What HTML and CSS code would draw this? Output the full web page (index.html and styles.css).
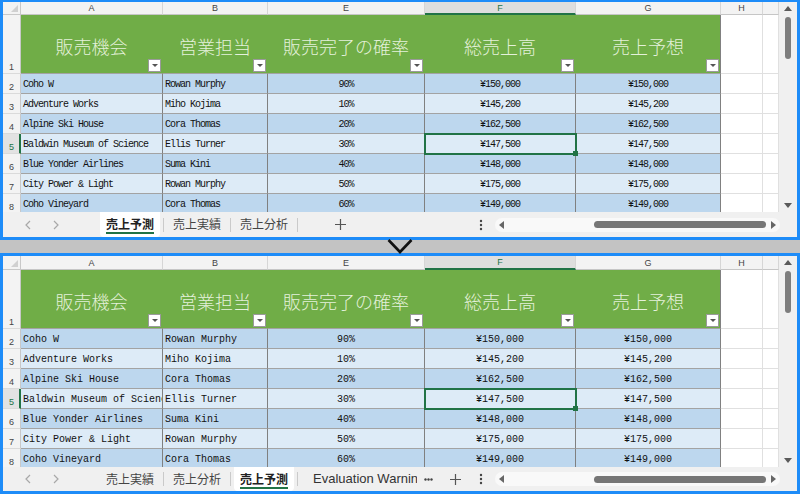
FILE: index.html
```html
<!DOCTYPE html>
<html lang="ja">
<head>
<meta charset="utf-8">
<title>売上予測</title>
<link rel="stylesheet" href="styles.css">
</head>
<body>
<div class="app">
  <section class="panel panel-top">
    <div class="sheet">
      <div class="grid">
        <div class="cell corner"></div>
        <div class="cell ch">A</div>
        <div class="cell ch">B</div>
        <div class="cell ch">E</div>
        <div class="cell ch active">F</div>
        <div class="cell ch">G</div>
        <div class="cell ch">H</div>
        <div class="cell ch"></div>

        <div class="cell rh">1</div>
        <div class="cell hd">販売機会<span class="filter"></span></div>
        <div class="cell hd">営業担当<span class="filter"></span></div>
        <div class="cell hd">販売完了の確率<span class="filter"></span></div>
        <div class="cell hd">総売上高<span class="filter"></span></div>
        <div class="cell hd hd-last">売上予想<span class="filter"></span></div>
        <div class="cell e"></div><div class="cell e"></div>

        <div class="cell rh">2</div>
        <div class="cell d dl ra">Coho W</div>
        <div class="cell d dl ra">Rowan Murphy</div>
        <div class="cell d dc ra">90%</div>
        <div class="cell d dc ra">¥150,000</div>
        <div class="cell d dc ra">¥150,000</div>
        <div class="cell e"></div><div class="cell e"></div>

        <div class="cell rh">3</div>
        <div class="cell d dl rb">Adventure Works</div>
        <div class="cell d dl rb">Miho Kojima</div>
        <div class="cell d dc rb">10%</div>
        <div class="cell d dc rb">¥145,200</div>
        <div class="cell d dc rb">¥145,200</div>
        <div class="cell e"></div><div class="cell e"></div>

        <div class="cell rh">4</div>
        <div class="cell d dl ra">Alpine Ski House</div>
        <div class="cell d dl ra">Cora Thomas</div>
        <div class="cell d dc ra">20%</div>
        <div class="cell d dc ra">¥162,500</div>
        <div class="cell d dc ra">¥162,500</div>
        <div class="cell e"></div><div class="cell e"></div>

        <div class="cell rh active">5</div>
        <div class="cell d dl rb">Baldwin Museum of Science</div>
        <div class="cell d dl rb">Ellis Turner</div>
        <div class="cell d dc rb">30%</div>
        <div class="cell d dc rb sel">¥147,500</div>
        <div class="cell d dc rb">¥147,500</div>
        <div class="cell e"></div><div class="cell e"></div>

        <div class="cell rh">6</div>
        <div class="cell d dl ra">Blue Yonder Airlines</div>
        <div class="cell d dl ra">Suma Kini</div>
        <div class="cell d dc ra">40%</div>
        <div class="cell d dc ra">¥148,000</div>
        <div class="cell d dc ra">¥148,000</div>
        <div class="cell e"></div><div class="cell e"></div>

        <div class="cell rh">7</div>
        <div class="cell d dl rb">City Power &amp; Light</div>
        <div class="cell d dl rb">Rowan Murphy</div>
        <div class="cell d dc rb">50%</div>
        <div class="cell d dc rb">¥175,000</div>
        <div class="cell d dc rb">¥175,000</div>
        <div class="cell e"></div><div class="cell e"></div>

        <div class="cell rh">8</div>
        <div class="cell d dl ra">Coho Vineyard</div>
        <div class="cell d dl ra">Cora Thomas</div>
        <div class="cell d dc ra">60%</div>
        <div class="cell d dc ra">¥149,000</div>
        <div class="cell d dc ra">¥149,000</div>
        <div class="cell e"></div><div class="cell e"></div>
      </div>
      <div class="vscroll">
        <svg class="vs-up" width="8" height="5" viewBox="0 0 8 5"><polygon points="4,0 8,5 0,5" fill="#5a5a5a"/></svg>
        <div class="vs-thumb"></div>
        <svg class="vs-down" width="8" height="5" viewBox="0 0 8 5"><polygon points="0,0 8,0 4,5" fill="#5a5a5a"/></svg>
      </div>
    </div>
    <div class="tabbar">
      <div class="nav">
        <svg width="6" height="10" viewBox="0 0 6 10"><polyline points="5,1 1,5 5,9" fill="none" stroke="#a8a8a8" stroke-width="1.2"/></svg>
        <svg width="6" height="10" viewBox="0 0 6 10"><polyline points="1,1 5,5 1,9" fill="none" stroke="#a8a8a8" stroke-width="1.2"/></svg>
      </div>
      <div class="tab active"><span class="lbl">売上予測</span></div>
      <div class="sep"></div>
      <div class="tab"><span class="lbl">売上実績</span></div>
      <div class="sep"></div>
      <div class="tab"><span class="lbl">売上分析</span></div>
      <div class="sep"></div>
      <svg class="add add-top" width="11" height="11" viewBox="0 0 11 11"><path d="M5.5 0V11M0 5.5H11" stroke="#555" stroke-width="1.2"/></svg>
      <div class="right">
        <svg class="kebab" width="4" height="12" viewBox="0 0 4 12"><circle cx="2" cy="2" r="1.2" fill="#444"/><circle cx="2" cy="6" r="1.2" fill="#444"/><circle cx="2" cy="10" r="1.2" fill="#444"/></svg>
        <div class="track">
          <svg class="tr-l" width="5" height="8" viewBox="0 0 5 8"><polygon points="5,0 5,8 0,4" fill="#666"/></svg>
          <div class="tr-thumb"></div>
          <svg class="tr-r" width="5" height="8" viewBox="0 0 5 8"><polygon points="0,0 5,4 0,8" fill="#666"/></svg>
        </div>
      </div>
    </div>
  </section>

  <div class="splitter"></div>

  <section class="panel panel-bottom">
    <div class="sheet">
      <div class="grid">
        <div class="cell corner"></div>
        <div class="cell ch">A</div>
        <div class="cell ch">B</div>
        <div class="cell ch">E</div>
        <div class="cell ch active">F</div>
        <div class="cell ch">G</div>
        <div class="cell ch">H</div>
        <div class="cell ch"></div>

        <div class="cell rh">1</div>
        <div class="cell hd">販売機会<span class="filter"></span></div>
        <div class="cell hd">営業担当<span class="filter"></span></div>
        <div class="cell hd">販売完了の確率<span class="filter"></span></div>
        <div class="cell hd">総売上高<span class="filter"></span></div>
        <div class="cell hd hd-last">売上予想<span class="filter"></span></div>
        <div class="cell e"></div><div class="cell e"></div>

        <div class="cell rh">2</div>
        <div class="cell d dl ra">Coho W</div>
        <div class="cell d dl ra">Rowan Murphy</div>
        <div class="cell d dc ra">90%</div>
        <div class="cell d dc ra">¥150,000</div>
        <div class="cell d dc ra">¥150,000</div>
        <div class="cell e"></div><div class="cell e"></div>

        <div class="cell rh">3</div>
        <div class="cell d dl rb">Adventure Works</div>
        <div class="cell d dl rb">Miho Kojima</div>
        <div class="cell d dc rb">10%</div>
        <div class="cell d dc rb">¥145,200</div>
        <div class="cell d dc rb">¥145,200</div>
        <div class="cell e"></div><div class="cell e"></div>

        <div class="cell rh">4</div>
        <div class="cell d dl ra">Alpine Ski House</div>
        <div class="cell d dl ra">Cora Thomas</div>
        <div class="cell d dc ra">20%</div>
        <div class="cell d dc ra">¥162,500</div>
        <div class="cell d dc ra">¥162,500</div>
        <div class="cell e"></div><div class="cell e"></div>

        <div class="cell rh active">5</div>
        <div class="cell d dl rb">Baldwin Museum of Science</div>
        <div class="cell d dl rb">Ellis Turner</div>
        <div class="cell d dc rb">30%</div>
        <div class="cell d dc rb sel">¥147,500</div>
        <div class="cell d dc rb">¥147,500</div>
        <div class="cell e"></div><div class="cell e"></div>

        <div class="cell rh">6</div>
        <div class="cell d dl ra">Blue Yonder Airlines</div>
        <div class="cell d dl ra">Suma Kini</div>
        <div class="cell d dc ra">40%</div>
        <div class="cell d dc ra">¥148,000</div>
        <div class="cell d dc ra">¥148,000</div>
        <div class="cell e"></div><div class="cell e"></div>

        <div class="cell rh">7</div>
        <div class="cell d dl rb">City Power &amp; Light</div>
        <div class="cell d dl rb">Rowan Murphy</div>
        <div class="cell d dc rb">50%</div>
        <div class="cell d dc rb">¥175,000</div>
        <div class="cell d dc rb">¥175,000</div>
        <div class="cell e"></div><div class="cell e"></div>

        <div class="cell rh">8</div>
        <div class="cell d dl ra">Coho Vineyard</div>
        <div class="cell d dl ra">Cora Thomas</div>
        <div class="cell d dc ra">60%</div>
        <div class="cell d dc ra">¥149,000</div>
        <div class="cell d dc ra">¥149,000</div>
        <div class="cell e"></div><div class="cell e"></div>
      </div>
      <div class="vscroll">
        <svg class="vs-up" width="8" height="5" viewBox="0 0 8 5"><polygon points="4,0 8,5 0,5" fill="#5a5a5a"/></svg>
        <div class="vs-thumb"></div>
        <svg class="vs-down" width="8" height="5" viewBox="0 0 8 5"><polygon points="0,0 8,0 4,5" fill="#5a5a5a"/></svg>
      </div>
    </div>
    <div class="tabbar">
      <div class="nav">
        <svg width="6" height="10" viewBox="0 0 6 10"><polyline points="5,1 1,5 5,9" fill="none" stroke="#a8a8a8" stroke-width="1.2"/></svg>
        <svg width="6" height="10" viewBox="0 0 6 10"><polyline points="1,1 5,5 1,9" fill="none" stroke="#a8a8a8" stroke-width="1.2"/></svg>
      </div>
      <div class="tab"><span class="lbl">売上実績</span></div>
      <div class="sep"></div>
      <div class="tab"><span class="lbl">売上分析</span></div>
      <div class="sep"></div>
      <div class="tab active"><span class="lbl">売上予測</span></div>
      <div class="sep"></div>
      <div class="tab tab-eval"><span class="lbl">Evaluation Warning</span></div>
      <svg class="more" width="9" height="3" viewBox="0 0 9 3"><circle cx="1.5" cy="1.5" r="1.2" fill="#444"/><circle cx="4.5" cy="1.5" r="1.2" fill="#444"/><circle cx="7.5" cy="1.5" r="1.2" fill="#444"/></svg>
      <svg class="add add-bottom" width="11" height="11" viewBox="0 0 11 11"><path d="M5.5 0V11M0 5.5H11" stroke="#555" stroke-width="1.2"/></svg>
      <div class="right">
        <svg class="kebab" width="4" height="12" viewBox="0 0 4 12"><circle cx="2" cy="2" r="1.2" fill="#444"/><circle cx="2" cy="6" r="1.2" fill="#444"/><circle cx="2" cy="10" r="1.2" fill="#444"/></svg>
        <div class="track">
          <svg class="tr-l" width="5" height="8" viewBox="0 0 5 8"><polygon points="5,0 5,8 0,4" fill="#666"/></svg>
          <div class="tr-thumb"></div>
          <svg class="tr-r" width="5" height="8" viewBox="0 0 5 8"><polygon points="0,0 5,4 0,8" fill="#666"/></svg>
        </div>
      </div>
    </div>
  </section>

  <svg class="split-chevron" width="26" height="15" viewBox="0 0 26 15"><polyline points="1.5,1 13,13 24.5,1" fill="none" stroke="#111" stroke-width="2.6"/></svg>
</div>
</body>
</html>
```

FILE: styles.css
```css
* { box-sizing: border-box; }

body {
  margin: 0;
  width: 800px;
  height: 496px;
  overflow: hidden;
  background: #fff;
  font-family: "Liberation Sans", Arial, sans-serif;
}

.app {
  position: relative;
  width: 800px;
}

.panel {
  border: 3px solid #1e8cf8;
  background: #fff;
}

.panel-top { border-top-width: 2px; }

.splitter {
  height: 13px;
  background: #c3c3c3;
}

.sheet {
  display: flex;
  height: 210px;
}

.panel-bottom .sheet { height: 211px; }

.grid {
  width: 776px;
  display: grid;
  grid-template-columns: 18px 142px 105px 157px 151px 145px 42px 16px;
  grid-template-rows: 13px 59px repeat(7, 20px);
  align-content: start;
  overflow: hidden;
}

.panel-bottom .grid { grid-template-rows: 14px 59px repeat(7, 20px); }

.cell {
  display: flex;
  align-items: center;
  min-width: 0;
  overflow: hidden;
  white-space: nowrap;
  border-right: 1px solid #808080;
  border-bottom: 1px solid #a3a3a3;
}

.corner {
  position: relative;
  background: #f3f3f3;
  border-right: 1px solid #c8c8c8;
  border-bottom: 1px solid #c8c8c8;
}

.corner::after {
  content: "";
  position: absolute;
  right: 2px;
  bottom: 2px;
  border-left: 7px solid transparent;
  border-bottom: 7px solid #d0d0d0;
}

.ch {
  justify-content: center;
  background: #f3f3f3;
  border-right: 1px solid #d6d6d6;
  border-bottom: 1px solid #c6c6c6;
  font-size: 9px;
  color: #444;
}

.ch.active {
  background: #dedede;
  color: #217346;
  border-bottom: 2px solid #217346;
}

.rh {
  align-items: flex-end;
  padding: 0 0 1px 6px;
  background: #f3f3f3;
  border-right: 1px solid #c8c8c8;
  border-bottom: 1px solid #dadada;
  font-size: 9px;
  color: #444;
}

.rh.active {
  background: #e2e2e2;
  color: #217346;
  border-right: 2px solid #217346;
}

.hd {
  position: relative;
  justify-content: center;
  background: #70ad47;
  border-right-color: #70ad47;
  border-bottom-color: #a3a3a3;
  color: #e4f1da;
  font-family: "Noto Sans CJK JP", sans-serif;
  font-size: 18px;
  font-weight: 300;
  padding-top: 4px;
}

.hd-last { border-right-color: #808080; }

.filter {
  position: absolute;
  right: 1px;
  bottom: 1px;
  width: 13px;
  height: 13px;
  background: #fff;
  border: 1px solid #9a9a9a;
}

.filter::after {
  content: "";
  position: absolute;
  left: 3px;
  top: 4px;
  border-left: 3px solid transparent;
  border-right: 3px solid transparent;
  border-top: 3px solid #555;
}

.d {
  padding-top: 2px;
  font-family: "Liberation Mono", "Courier New", monospace;
  font-size: 10px;
  color: #111;
}

.panel-top .d { letter-spacing: -1px; }

.dl { padding-left: 2px; }
.dc { justify-content: center; }

.ra { background: #bdd7ee; }
.rb { background: #ddebf7; }

.e {
  background: #fff;
  border-right: 1px solid #e0e0e0;
  border-bottom: 1px solid #e0e0e0;
}

.sel {
  position: relative;
  overflow: visible;
  outline: 2px solid #217346;
  outline-offset: -1px;
}

.sel::after {
  content: "";
  position: absolute;
  right: -3px;
  bottom: -3px;
  width: 5px;
  height: 5px;
  background: #217346;
}

.vscroll {
  width: 18px;
  display: flex;
  flex-direction: column;
  align-items: center;
  background: #f0f0f0;
}

.vs-up { margin-top: 4px; display: block; }

.vs-thumb {
  margin-top: 6px;
  width: 6px;
  height: 42px;
  border-radius: 3px;
  background: #7d7d7d;
}

.vs-down { margin-top: auto; margin-bottom: 4px; display: block; }

.tabbar {
  height: 25px;
  display: flex;
  align-items: center;
  background: #f0f0f0;
}

.panel-bottom .tabbar { height: 24px; }

.nav {
  width: 97px;
  height: 100%;
  display: flex;
  align-items: center;
  gap: 22px;
  padding-left: 22px;
}

.nav svg { display: block; }

.tab {
  height: 100%;
  padding: 0 6px;
  display: flex;
  align-items: center;
  font-family: "Noto Sans CJK JP", sans-serif;
  font-size: 12px;
  color: #444;
}

.tab .lbl {
  line-height: 14px;
  padding-bottom: 1px;
  border-bottom: 2px solid transparent;
  margin-top: 2px;
}

.tab.active {
  background: #fff;
  border-radius: 0 0 4px 4px;
  color: #222;
  font-weight: bold;
}

.tab.active .lbl { border-bottom-color: #217346; }

.tab-eval {
  width: 116px;
  padding: 0 0 0 12px;
  overflow: hidden;
  white-space: nowrap;
  font-family: "Liberation Sans", Arial, sans-serif;
  font-size: 13px;
  color: #333;
}

.sep {
  width: 1px;
  height: 14px;
  margin: 0 3px;
  background: #cacaca;
}

.add { display: block; }
.add-top { margin-left: 34px; }
.add-bottom { margin-left: 17px; }

.more { display: block; margin-left: 7px; }

.right {
  margin-left: auto;
  display: flex;
  align-items: center;
  padding-right: 17px;
}

.kebab { display: block; margin-right: 12px; }

.track {
  width: 285px;
  height: 14px;
  display: flex;
  align-items: center;
  padding: 0 4px;
  border-radius: 7px;
  background: #f9f9f9;
}

.track svg { display: block; }

.tr-thumb {
  margin-left: 90px;
  width: 172px;
  height: 7px;
  border-radius: 4px;
  background: #767676;
}

.tr-r { margin-left: 5px; }

.split-chevron {
  position: absolute;
  left: 387px;
  top: 239px;
}
```
